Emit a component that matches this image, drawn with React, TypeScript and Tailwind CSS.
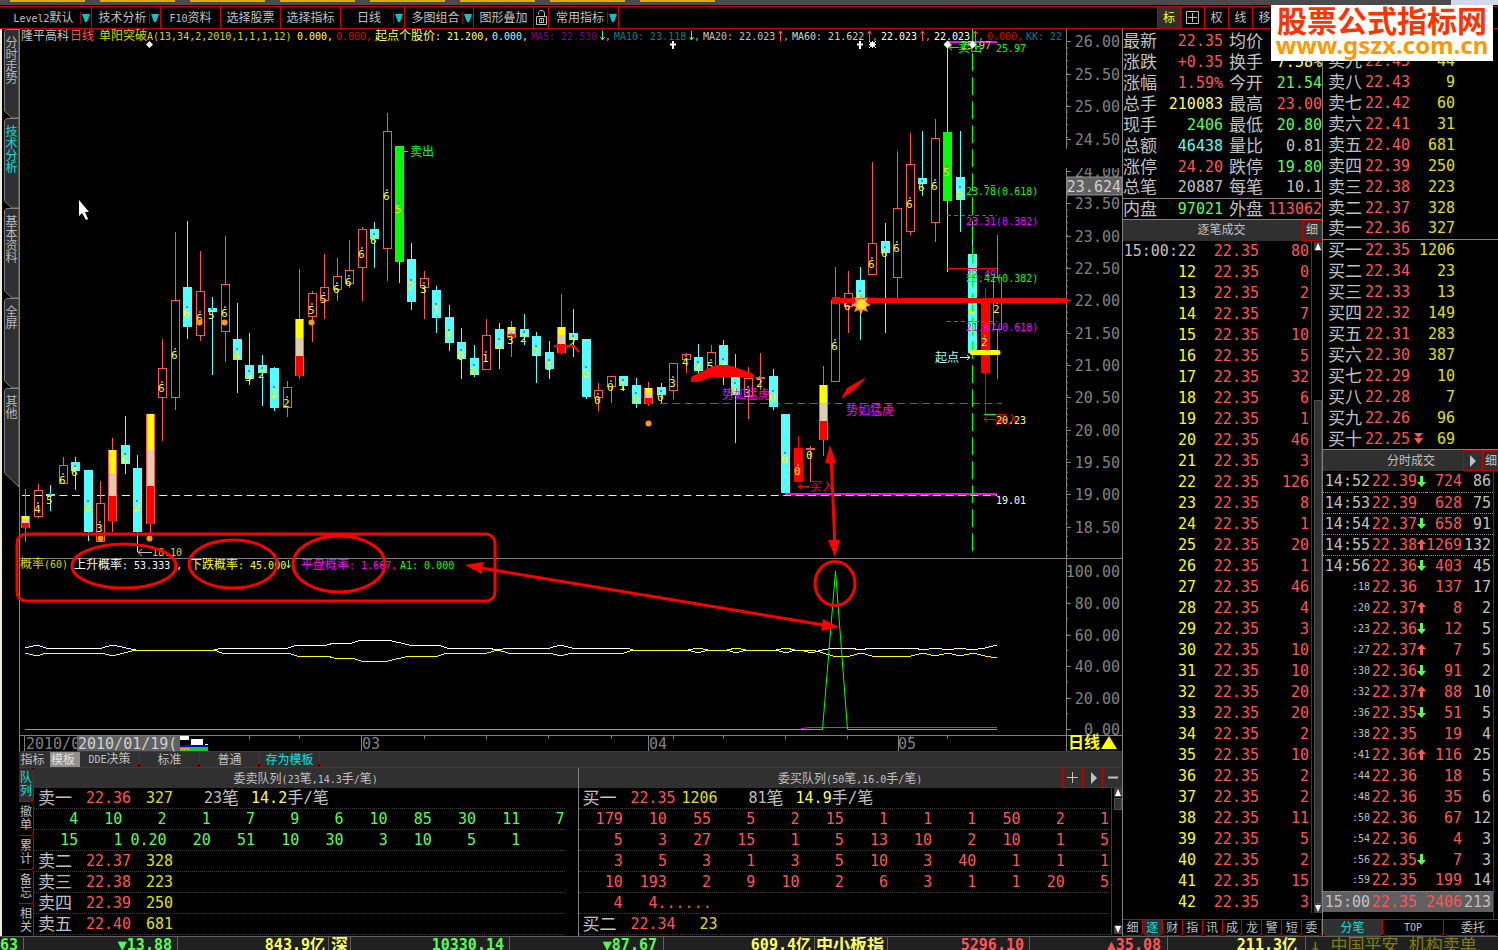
import React from 'react';

type Kind = 'hollow' | 'down' | 'tri' | 'sell' | 'solid';

interface Candle {
  high: number;
  top: number;
  bottom: number;
  low: number;
  kind: Kind;
  label?: string;
  labelY?: number;
  // boundaries of the yellow / tan / red segments
  split?: [number, number];
}

const c = (
  high: number,
  top: number,
  bottom: number,
  low: number,
  kind: Kind,
  label?: string,
  labelY?: number,
  split?: [number, number],
): Candle => ({ high, top, bottom, low, kind, label, labelY, split });

const CANDLES: Candle[] = [
  c(489, 516, 528, 542, 'tri', undefined, undefined, [519, 523]),
  c(484, 490, 517, 518, 'hollow', '4', 509),
  c(485, 494, 496, 511, 'down', '5', 500),
  c(457, 465, 484, 484, 'hollow', '6', 480),
  c(457, 462, 471, 490, 'down', '6', 472),
  c(470, 470, 532, 541, 'down', '3', 507),
  c(481, 503, 542, 542, 'hollow', '3', 528),
  c(438, 450, 521, 532, 'tri', undefined, undefined, [473, 496]),
  c(416, 445, 464, 474, 'down', '6', 460),
  c(455, 468, 532, 552, 'down', '2', 507),
  c(414, 414, 524, 535, 'tri', undefined, undefined, [450, 486]),
  c(339, 368, 398, 441, 'hollow', '6', 388),
  c(232, 300, 398, 410, 'hollow', '6', 355),
  c(221, 287, 327, 339, 'down', '6', 313),
  c(251, 291, 336, 341, 'hollow', '6', 318),
  c(297, 308, 312, 375, 'down', '5', 315),
  c(236, 284, 332, 362, 'hollow', '6', 313),
  c(303, 339, 360, 393, 'down', '4', 355),
  c(333, 365, 379, 385, 'down', '3', 377),
  c(355, 365, 373, 406, 'down', '2', 374),
  c(367, 368, 408, 411, 'down', '2', 393),
  c(381, 387, 408, 417, 'hollow', '2', 403),
  c(269, 319, 376, 379, 'tri', undefined, undefined, [338, 356]),
  c(291, 293, 317, 342, 'hollow', '5', 310),
  c(254, 287, 301, 319, 'hollow', '5', 299),
  c(258, 276, 290, 301, 'hollow', '6', 289),
  c(240, 270, 284, 288, 'hollow', '6', 282),
  c(227, 229, 268, 301, 'hollow', '6', 254),
  c(222, 229, 239, 268, 'down', '6', 240),
  c(113, 131, 249, 281, 'hollow', '6', 196),
  c(146, 146, 262, 283, 'sell', '5', 209),
  c(243, 259, 302, 310, 'down', '2', 286),
  c(271, 278, 288, 319, 'hollow', '3', 289),
  c(286, 290, 318, 333, 'down', '1', 310),
  c(305, 317, 343, 351, 'down', '1', 336),
  c(328, 342, 359, 379, 'down', '0', 356),
  c(345, 358, 375, 377, 'down', '0', 371),
  c(319, 335, 370, 370, 'hollow', '1', 358),
  c(323, 329, 349, 369, 'down', '2', 345),
  c(321, 327, 338, 357, 'tri', '3', 340, [330, 334]),
  c(314, 329, 337, 345, 'down', '2', 338),
  c(332, 336, 356, 383, 'down', '2', 352),
  c(341, 352, 369, 379, 'down', '1', 366),
  c(294, 327, 353, 354, 'tri', undefined, undefined, [335, 344]),
  c(309, 333, 340, 357, 'down', '2', 342),
  c(339, 339, 397, 399, 'down', '0', 373),
  c(383, 390, 398, 411, 'hollow', '0', 400),
  c(376, 376, 387, 403, 'hollow', '0', 387),
  c(376, 376, 386, 391, 'down', '1', 386),
  c(378, 385, 404, 408, 'down', '0', 399),
  c(382, 388, 404, 406, 'tri', undefined, undefined, [393, 398]),
  c(383, 387, 395, 403, 'down', '0', 397),
  c(363, 363, 391, 399, 'hollow', '3', 383),
  c(353, 354, 360, 373, 'hollow', '4', 362),
  c(344, 357, 371, 375, 'down', '4', 368),
  c(345, 352, 370, 370, 'hollow', '5', 366),
  c(340, 345, 366, 385, 'down', '3', 365),
  c(354, 377, 395, 443, 'down', '1', 389),
  c(367, 378, 397, 419, 'hollow', '3', 393),
  c(353, 377, 378, 390, 'hollow', '2', 383),
  c(369, 376, 407, 410, 'down', '0', 397),
  c(414, 414, 493, 494, 'down', '0', 459),
  c(436, 448, 482, 482, 'solid', '0', 471),
  c(446, 448, 449, 482, 'hollow', '0', 455),
  c(366, 385, 440, 456, 'tri', undefined, undefined, [403, 421]),
  c(267, 300, 382, 382, 'hollow', '6', 346),
  c(271, 293, 307, 333, 'hollow', '6', 306),
  c(267, 280, 300, 340, 'down', '6', 297),
  c(162, 243, 275, 275, 'hollow', '6', 264),
  c(223, 241, 253, 333, 'down', '6', 253),
  c(151, 208, 278, 298, 'hollow', '6', 248),
  c(133, 164, 232, 235, 'hollow', '6', 204),
  c(131, 178, 184, 196, 'down', '6', 187),
  c(119, 138, 223, 242, 'hollow', '6', 186),
  c(44, 132, 201, 272, 'sell', '5', 172),
  c(131, 177, 200, 232, 'down', '5', 193),
  c(239, 254, 353, 353, 'down', '2', 309),
  c(288, 302, 373, 414, 'solid', '2', 342),
  c(235, 277, 330, 379, 'hollow', '2', 309),
];

const STEP = 12.46;

const PRICE_TICKS: [string, number][] = [
  ['26.00', 41], ['25.50', 74], ['25.00', 106], ['24.50', 139], ['24.00', 171], ['23.50', 203],
  ['23.00', 236], ['22.50', 268], ['22.00', 300], ['21.50', 333], ['21.00', 365], ['20.50', 397],
  ['20.00', 430], ['19.50', 462], ['19.00', 494], ['18.50', 527],
];

const RATE_TICKS: [string, number][] = [
  ['100.00', 571], ['80.00', 603], ['60.00', 635], ['40.00', 666], ['20.00', 698], ['0.00', 729],
];

const QUOTES: [string, string, string, string, string, string][] = [
  ['最新', '22.35', 'text-[#ff5454]', '均价', '', 'text-[#ff5454]'],
  ['涨跌', '+0.35', 'text-[#ff5454]', '换手', '7.58%', 'text-[#ffff54]'],
  ['涨幅', '1.59%', 'text-[#ff5454]', '今开', '21.54', 'text-[#54ff54]'],
  ['总手', '210083', 'text-[#ffff54]', '最高', '23.00', 'text-[#ff5454]'],
  ['现手', '2406', 'text-[#54ff54]', '最低', '20.80', 'text-[#54ff54]'],
  ['总额', '46438', 'text-[#54ffff]', '量比', '0.81', 'text-[#c0c0c0]'],
  ['涨停', '24.20', 'text-[#ff5454]', '跌停', '19.80', 'text-[#54ff54]'],
  ['总笔', '20887', 'text-[#c0c0c0]', '每笔', '10.1', 'text-[#c0c0c0]'],
  ['内盘', '97021', 'text-[#54ff54]', '外盘', '113062', 'text-[#ff5454]'],
];

const TICK_VOLUMES = [
  80, 0, 2, 7, 10, 5, 32, 6, 1, 46, 3, 126, 8, 1, 20, 1, 46, 4, 3, 10, 10, 20, 20, 2, 10, 2, 2, 11, 5, 2, 15, 3,
];

const ASKS: [string, string, string][] = [
  ['卖九', '22.45', '44'], ['卖八', '22.43', '9'], ['卖七', '22.42', '60'],
  ['卖六', '22.41', '31'], ['卖五', '22.40', '681'], ['卖四', '22.39', '250'], ['卖三', '22.38', '223'],
  ['卖二', '22.37', '328'], ['卖一', '22.36', '327'],
];

const BIDS: [string, string, string][] = [
  ['买一', '22.35', '1206'], ['买二', '22.34', '23'], ['买三', '22.33', '13'], ['买四', '22.32', '149'],
  ['买五', '22.31', '283'], ['买六', '22.30', '387'], ['买七', '22.29', '10'], ['买八', '22.28', '7'],
  ['买九', '22.26', '96'], ['买十', '22.25', '69'],
];

const DEALS: [string, string, 'up' | 'down' | '', string, string][] = [
  ['14:52', '22.39', 'down', '724', '86'],
  ['14:53', '22.39', '', '628', '75'],
  ['14:54', '22.37', 'down', '658', '91'],
  ['14:55', '22.38', 'up', '1269', '132'],
  ['14:56', '22.36', 'down', '403', '45'],
  [':18', '22.36', '', '137', '17'],
  [':20', '22.37', 'up', '8', '2'],
  [':23', '22.36', 'down', '12', '5'],
  [':27', '22.37', 'up', '7', '5'],
  [':30', '22.36', 'down', '91', '2'],
  [':32', '22.37', 'up', '88', '10'],
  [':36', '22.35', 'down', '51', '5'],
  [':38', '22.35', '', '19', '4'],
  [':41', '22.36', 'up', '116', '25'],
  [':44', '22.36', '', '18', '5'],
  [':48', '22.36', '', '35', '6'],
  [':50', '22.36', '', '67', '12'],
  [':54', '22.36', '', '4', '3'],
  [':56', '22.35', 'down', '7', '3'],
  [':59', '22.35', '', '199', '14'],
  ['15:00', '22.35', '', '2406', '213'],
];

const runs = (text: string) => text.match(/[\x00-\x7f]+|[^\x00-\x7f]+/g) ?? [];
const isAscii = (text: string) => text.charCodeAt(0) < 128;

// Small label: latin runs are set narrower than the Chinese ones
const Small: React.FC<{ children: string }> = ({ children }) => (
  <span className="whitespace-pre text-[12px]">
    {runs(children).map((run, i) => (
      <span key={i} className={isAscii(run) ? 'text-[10px]' : 'text-[12px]'}>{run}</span>
    ))}
  </span>
);

const Label: React.FC<{ x: number; y: number; fill: string; children: string }> = ({ x, y, fill, children }) => (
  <text x={x} y={y} fill={fill} className="whitespace-pre">
    {runs(children).map((run, i) => (
      <tspan key={i} className={isAscii(run) ? 'text-[10px]' : 'text-[12px]'}>{run}</tspan>
    ))}
  </text>
);

const Caret = () => (
  <svg className="h-2 w-2" viewBox="0 0 8 8"><path d="M0 0h8L5 8H3z" fill="#00c8c8" /></svg>
);

const ToolItem: React.FC<{ width: string; caret?: boolean; children: React.ReactNode }> = ({ width, caret, children }) => (
  <button className={`flex h-full shrink-0 items-center border-r border-[#c80000] ${width}`}>
    <span className={`flex flex-1 justify-center ${caret ? 'pl-1' : ''}`}>{children}</span>
    {caret && (
      <span className="flex h-3 w-[11px] items-center justify-end border-l border-[#a00000] pr-px">
        <Caret />
      </span>
    )}
  </button>
);

const Toolbar = () => (
  <div className="flex h-[23px] items-center border-y border-[#c80000] pl-[3px]">
    <ToolItem width="w-[89px]" caret><Small>Level2默认</Small></ToolItem>
    <ToolItem width="w-[69px]" caret><Small>技术分析</Small></ToolItem>
    <ToolItem width="w-[60px]"><Small>F10资料</Small></ToolItem>
    <ToolItem width="w-[60px]"><Small>选择股票</Small></ToolItem>
    <ToolItem width="w-[60px]"><Small>选择指标</Small></ToolItem>
    <ToolItem width="w-[64px]" caret><Small>日线</Small></ToolItem>
    <ToolItem width="w-[69px]" caret><Small>多图组合</Small></ToolItem>
    <ToolItem width="w-[60px]"><Small>图形叠加</Small></ToolItem>
    <ToolItem width="w-[15px]">
      <svg className="h-[15px] w-[11px]" viewBox="0 0 11 15" fill="none" stroke="#c0c0c0" aria-label="lock">
        <path d="M2.500 4.500v-2l1.500-2h3l1.500 2v4M.5 6.500h10v8H.5zM3.500 8.500h4v4h-4zM5.500 9.500v2" />
      </svg>
    </ToolItem>
    <ToolItem width="w-[70px]" caret><Small>常用指标</Small></ToolItem>
    <div className="ml-auto flex h-full w-[341px]">
      <button className="w-6 border-x border-[#c80000] bg-[#303030] text-[12px] text-[#ffff00]">标</button>
      <button className="flex w-6 items-center justify-center border-r border-[#c80000]" aria-label="grid">
        <svg className="h-[13px] w-[13px]" viewBox="0 0 13 13" fill="none" stroke="#c0c0c0">
          <path d="M.5.5h12v12H.5zM6.500 2v9M2 6.500h9" />
        </svg>
      </button>
      {['权', '线', '移'].map((t) => (
        <button key={t} className="w-6 border-r border-[#c80000] text-[12px]">{t}</button>
      ))}
    </div>
  </div>
);

const sideTabs = [
  { text: '分时走势', h: 'h-[89px]', px: 89 },
  { text: '技术分析', h: 'h-[90px]', px: 90, active: true },
  { text: '基本资料', h: 'h-[90px]', px: 90 },
  { text: '全屏', h: 'h-[90px]', px: 90 },
  { text: '其他', h: 'h-[99px]', px: 99, last: true },
];

const SideTabs = () => (
  <nav className="w-[19px] shrink-0 border-l-2 border-[#f4ecd8] pl-[2px]">
    {sideTabs.map(({ text, h, px, active, last }) => (
      <button
        key={text}
        className={`relative block w-[15px] pt-2 text-left align-top text-[12px] leading-3 ${h} ${active ? 'text-[#00e0e0]' : 'text-[#b8b8b8]'}`}
      >
        <svg className="absolute inset-0 h-full w-full" viewBox={`0 0 15 ${px}`} preserveAspectRatio="none">
          <path
            d={last ? `M2.500 .5L.5 2.500V${px - 14}L15 ${px}V.5z` : `M2.500 .5L.5 2.500V${px - 7}L8 ${px}H15V.5z`}
            fill="#303030"
            stroke="#808080"
          />
        </svg>
        <span className="relative flex h-full flex-col items-center">
          {[...text].map((ch) => <span key={ch}>{ch}</span>)}
        </span>
      </button>
    ))}
  </nav>
);

const CandleShape: React.FC<{ candle: Candle; index: number }> = ({ candle, index }) => {
  const x = Math.round(25.2 + index * STEP);
  const { high, top, bottom, low, kind, label, labelY, split } = candle;
  const wick = kind === 'hollow' || kind === 'tri' ? '#ff5454' : kind === 'solid' ? '#ff0000' : '#54ffff';
  const fill = { hollow: 'none', down: '#54ffff', tri: '#ff0000', sell: '#00ff00', solid: '#ff0000' }[kind];
  return (
    <g>
      <path d={`M${x + 0.5} ${high}V${top}M${x + 0.5} ${bottom}V${low}`} stroke={wick} />
      {kind === 'hollow' ? (
        <rect x={x - 3.5} y={top + 0.5} width={8} height={Math.max(bottom - top - 1, 1)} fill="none" stroke={wick} />
      ) : (
        <rect x={x - 4} y={top} width={9} height={bottom - top} fill={fill} />
      )}
      {split && (
        <>
          <rect x={x - 4} y={top} width={9} height={bottom - top} fill="#ff5454" />
          <rect x={x - 3} y={top} width={7} height={split[0] - top} fill="#ffff00" />
          <rect x={x - 3} y={split[0]} width={7} height={split[1] - split[0]} fill="#deceae" />
          <rect x={x - 3} y={split[1]} width={7} height={bottom - split[1]} fill="#ff0000" />
        </>
      )}
      {label && labelY && (
        <>
          <rect x={x - 1} y={labelY - 7} width={2} height={2} fill="#808080" />
          <text x={x - 4} y={labelY + 4} fill="#ffff00" className="text-[11px]">{label}</text>
        </>
      )}
    </g>
  );
};

const Chart = () => (
  <svg
    className="relative z-10 block h-[722px] w-full overflow-visible"
    viewBox="19 29 1103 722"
    preserveAspectRatio="xMinYMin"
    role="img"
    aria-label="隆平高科日线"
  >
    {/* frame */}
    <path d="M19.500 29V751M19 558.500H1122M19 735.500H1122M1066.500 29V149M1066.500 168V751" stroke="#808080" fill="none" />
    <path d="M1067.500 41V149M1067.500 171V556" stroke="#808080" strokeDasharray="1 5.400" />
    <path d="M1067.500 571V734" stroke="#808080" strokeDasharray="1 14.800" />
    {PRICE_TICKS.map(([t, y]) => (
      <g key={t}>
        <path d={`M1067 ${y + 0.5}h4`} stroke="#808080" />
        <text x={1120} y={y + 6} fill="#808080" textAnchor="end" className="text-[15px]">{t}</text>
      </g>
    ))}
    {RATE_TICKS.map(([t, y]) => (
      <g key={t}>
        <path d={`M1067 ${y + 0.5}h4`} stroke="#808080" />
        <text x={1120} y={y + 6} fill="#808080" textAnchor="end" className="text-[15px]">{t}</text>
      </g>
    ))}
    <path d="M1060 150h62v18h-62z" fill="#000" />
    <rect x={1067} y={177} width={55} height={18} fill="#606060" stroke="#909090" />
    <text x={1121} y={192} fill="#d0d0d0" textAnchor="end" className="text-[15px]">23.624</text>

    {/* horizontal levels */}
    <path d="M22 495.500H997" stroke="#ffff54" strokeDasharray="8 4.480" />
    <path d="M660 403.500H1002" stroke="#ff2020" strokeDasharray="8 4.480" />

    {CANDLES.map((candle, i) => <CandleShape key={i} candle={candle} index={i} />)}

    {[[100, 538], [149, 538], [199, 322], [224, 322], [311, 322], [648, 423]].map(([x, y]) => (
      <circle key={`${x}-${y}`} cx={x + 0.5} cy={y + 0.5} r={3} fill="#ff9c00" />
    ))}

    <path d="M785 494H997" stroke="#ff00ff" strokeWidth={2} />
    <path d="M947 42H997" stroke="#ff00ff" strokeWidth={2} />
    <path d="M972.500 29V554" stroke="#00ff00" strokeDasharray="18 6" />
    <path d="M691 377L705 370 716 365 728 365 740 369 754 374V378L735 377 712 377 698 382H691z" fill="#ff0000" />
    <path d="M554 346h20l5 6" stroke="#ff0000" strokeWidth={2} fill="none" />
    <path d="M841 399L847 388 866 377 858 387 850 393z" fill="#ff0000" />
    <path d="M947 268.500H997" stroke="#ff0000" />
    <path d="M947 215.500H997M947 321.500H997" stroke="#ff00ff" strokeDasharray="4 3" />
    <path d="M984 185.500H997" stroke="#00ff00" strokeDasharray="4 3" />
    <path d="M984 414.500H997" stroke="#00ff00" />
    <path d="M972 352.500H998" stroke="#ffff00" strokeWidth={5} strokeLinecap="round" />
    <path d="M832 297h8v1h226l4 2.500-4 2.500H840v1h-8z" fill="#ff0000" />
    <path d="M861 294l2 5 5-2-2 5 5 3-5 2 2 5-5-2-2 5-2-5-5 2 2-5-5-2 5-3-2-5 5 2z" fill="#ff9050" />
    <circle cx={861.5} cy={304.5} r={5} fill="#ffe020" />

    <path d="M402 151.500h6" stroke="#00ff00" />
    <Label x={410} y={156} fill="#00ff00">卖出</Label>
    <Label x={961} y={49} fill="#d8d800">25.97</Label>
    <Label x={958} y={52} fill="#00ff00">卖出</Label>
    <path d="M949 47.500h10M952 45l-3 2.500 3 2.500" stroke="#00ff00" fill="none" />
    <Label x={996} y={52} fill="#00ff00">25.97</Label>
    <Label x={966} y={195} fill="#00ff00">23.78(0.618)</Label>
    <Label x={966} y={225} fill="#ff00ff">23.31(0.382)</Label>
    <Label x={966} y={278} fill="#ff00ff">22.49</Label>
    <Label x={966} y={282} fill="#00ff00">22.42(0.382)</Label>
    <Label x={966} y={331} fill="#ff00ff">21.67(0.618)</Label>
    <Label x={935} y={362} fill="#a8ffff">起点</Label>
    <path d="M960 357.500h10M967 355l3 2.500-3 2.500" stroke="#a8ffff" fill="none" />
    <Label x={722} y={399} fill="#ff00ff">势如猛虎</Label>
    <Label x={846} y={415} fill="#ff00ff">势如猛虎</Label>
    <path d="M984 419.500h12M987 417l-3 2.500 3 2.500M798 486.500h11M801 484l-3 2.500 3 2.500" stroke="#ff0000" fill="none" />
    <Label x={995} y={424} fill="#ff0000">买入</Label>
    <Label x={996} y={424} fill="#ffff54">20.23</Label>
    <Label x={810} y={491} fill="#ff0000">买入</Label>
    <Label x={996} y={504} fill="#ffffff">19.01</Label>
    <path d="M138 552.500h14M142 549l-4 3.500 4 3.500" stroke="#c0c0c0" fill="none" />
    <Label x={152} y={556} fill="#d8d800">18.10</Label>

    {/* markers at the top */}
    <path d="M149.500 41l3.500 3.500-3.500 3.500-3.500-3.500zM947.500 40.500l4 4-4 4-4-4zM972.500 40.500l4 4-4 4-4-4z" fill="#ffffff" />
    <path d="M670 44.500h6M673 41v8M857 44.500h6M860 41v8" stroke="#ffffff" strokeWidth={2} />
    <circle cx={872.5} cy={44.5} r={2.5} fill="#ffffff" />
    <path d="M869 41l7 7M876 41l-7 7M872.500 41v7M869 44.500h7" stroke="#ffffff" />

    {/* main indicator line */}
    <Label x={21} y={40} fill="#c0c0c0">隆平高科</Label>
    <Label x={70} y={40} fill="#ff5454">日线</Label>
    <Label x={99} y={40} fill="#d8d800">单阳突破A(13,34,2,2010,1,1,1,12)</Label>
    <Label x={297} y={40} fill="#ffff54">0.000,</Label>
    <Label x={336} y={40} fill="#e00000">0.000,</Label>
    <Label x={375} y={40} fill="#ffff54">起点个股价: 21.200,</Label>
    <Label x={492} y={40} fill="#a8ffff">0.000,</Label>
    <Label x={531} y={40} fill="#800080">MA5: 22.530</Label>
    <Label x={614} y={40} fill="#008080">MA10: 23.118</Label>
    <Label x={703} y={40} fill="#c0c0c0">MA20: 22.023</Label>
    <Label x={792} y={40} fill="#c0dcc0">MA60: 21.622</Label>
    <Label x={881} y={40} fill="#ffffff">22.023</Label>
    <Label x={934} y={40} fill="#ffffff">22.023</Label>
    <Label x={987} y={40} fill="#e00000">0.000,</Label>
    <Label x={1026} y={40} fill="#008080">KK: 22</Label>
    {[602, 691].map((x) => (
      <path key={x} d={`M${x + 0.5} 31v9m-2-3l2 3 2-3`} stroke="#54ff54" fill="none" />
    ))}
    {[780, 869, 922, 975].map((x) => (
      <path key={x} d={`M${x + 0.5} 41v-10m-2 3l2-3 2 3`} stroke="#ff5454" fill="none" />
    ))}
    {[605, 694, 783, 872, 925, 978].map((x) => (
      <Label key={x} x={x} y={40} fill="#a0a0a0">,</Label>
    ))}

    {/* sub chart */}
    <polyline
      points="25,648 37,645 46,648 102,648 112,645 136,650 214,650 222,648 288,648 297,645 327,645 334,643 352,643 361,640 388,640 409,645 438,645 447,648 487,648 498,650 508,648 550,648 560,645 572,648 627,648 633,650 688,650 698,653 708,650 727,650 736,653 746,650 776,650 786,653 795,650 801,650 811,653 822,650 835,648 850,648 861,650 870,648 913,648 924,650 935,648 948,650 960,648 972,650 985,648 997,645"
      fill="none" stroke="#ffffff" shapeRendering="crispEdges"
    />
    <polyline
      points="25,653 37,656 46,653 102,653 112,656 136,650 214,650 222,653 288,653 297,656 327,656 334,658 352,658 361,661 388,661 409,656 438,656 447,653 487,653 498,650 508,653 550,653 560,656 572,653 624,653 633,650 688,650 698,648 708,650 727,650 736,648 746,650 776,650 786,648 795,650 813,650 833,656 850,656 861,653 872,656 911,656 923,653 935,656 948,653 960,656 973,653 985,656 997,658"
      fill="none" stroke="#ffff00" shapeRendering="crispEdges"
    />
    <path d="M801 728.500L810 727.500H997" stroke="#ff00ff" fill="none" />
    <path d="M25 729.500H822.500L835.500 571 847.500 729.500H997" stroke="#00ff00" fill="none" />
    <Label x={20} y={568} fill="#d8d800">概率(60)</Label>
    <Label x={74} y={569} fill="#ffffff">上升概率: 53.333 ,</Label>
    <Label x={190} y={569} fill="#ffff00">下跌概率: 45.000</Label>
    <path d="M288.500 560v8m-2-3l2 3 2-3" stroke="#54ff54" fill="none" />
    <Label x={301} y={569} fill="#ff00ff">平盘概率: 1.667,</Label>
    <Label x={400} y={569} fill="#00ff00">A1: 0.000</Label>

    {/* time axis */}
    <path
      d="M24.500 736v15M361.500 736v15M648.500 736v15M898.500 736v15M249.500 736v3M299.500 736v3M424.500 736v3M486.500 736v3M548.500 736v3M611.500 736v3M673.500 736v3M723.500 736v3M785.500 736v3M847.500 736v3M910.500 736v3M947.500 736v3"
      stroke="#808080"
    />
    <g className="text-[15px]">
      <text x={26} y={749} fill="#808080">2010/0</text>
      <text x={362} y={749} fill="#808080">03</text>
      <text x={649} y={749} fill="#808080">04</text>
      <text x={898} y={749} fill="#808080">05</text>
      <rect x={77} y={736} width={103} height={15} fill="#606060" />
      <text x={78} y={749} fill="#d0d0d0">2010/01/19(</text>
      <text x={1068} y={748} fill="#ffff00" className="text-[16px] font-bold">日线</text>
    </g>
    <path d="M1109 736l8 13h-16z" fill="#ffff00" />
    <path d="M180 736h9v4h-9zM191 739h12v6h-12zM205 744h3v2h-3z" fill="#ffffff" />
    <path d="M180 745h28v2h-28z" fill="#0000ff" />
    <path d="M180 747h28v4h-28z" fill="#20c820" />
    <path d="M180 748h10v2h-10z" fill="#ff9000" />

    {/* hand-drawn notes */}
    <g fill="none" stroke="#ff0000" strokeWidth={3}>
      <rect x={17} y={534} width={478} height={67} rx={9} />
      <ellipse cx={124} cy={566} rx={52} ry={22} />
      <ellipse cx={233} cy={564} rx={44} ry={24} />
      <ellipse cx={339} cy={564} rx={46} ry={28} />
      <ellipse cx={835} cy={583.5} rx={20} ry={22} />
      <path d="M475 567L830 626M831 455L835 548" />
    </g>
    <path d="M465 565l18-3-1 12zM839 627l-16-8-2 12zM830 445l-5 18h11zM835 557l-7-17h12z" fill="#ff0000" />
    <path d="M79 200v16l3-3 4 7 2-1-3-7h4z" fill="#ffffff" />
  </svg>
);

const TemplateTabs = () => (
  <div className="flex h-[17px] items-center border-y border-[#c80000] bg-[#303030] text-[12px] leading-3">
    <button className="w-[31px] pr-1 whitespace-nowrap">指标</button>
    <button className="h-full w-[30px] bg-[#909090] pr-1 whitespace-nowrap text-[#e0e0e0]">模板</button>
    {['DDE决策', '标准', '普通', '存为模板'].map((t) => (
      <button
        key={t}
        className={`relative h-full w-[60px] border-r border-[#c80000] ${t === '存为模板' ? 'text-[#00e0e0]' : ''}`}
      >
        <Small>{t}</Small>
        <svg className="absolute -right-1 bottom-0 h-1 w-2" viewBox="0 0 8 4"><path d="M1 4l3-4 3 4z" fill="#000" stroke="#c80000" /></svg>
      </button>
    ))}
  </div>
);

const queueTabs = ['队列', '撤单', '累计', '备忘', '相关'];

interface QueueHeadProps {
  name: string;
  price: string;
  count: string;
  orders?: string;
  avg?: string;
}

const rowLine = 'h-[21px] border-b border-dotted border-[#404040] leading-5';

const QueueHead: React.FC<QueueHeadProps> = ({ name, price, count, orders, avg }) => (
  <div className={`flex pl-1 ${rowLine}`}>
    <span className="w-12 text-[17px]">{name}</span>
    <span className="w-[45px] text-[#ff5454]">{price}</span>
    <span className="w-[42px] text-right text-[#e0e000]">{count}</span>
    {orders && (
      <span className="ml-[31px] flex">
        {orders}<span className="text-[17px]">笔</span>
        <span className="ml-3 text-[#ffff54]">{avg}</span>
        <span className="text-[16px]">手/笔</span>
      </span>
    )}
  </div>
);

const QueueRow: React.FC<{ values: string[]; color: string }> = ({ values, color }) => (
  <div className={`grid grid-cols-12 text-right ${rowLine} ${color}`}>
    {values.map((v, i) => <span key={i} className="flex justify-end">{v}</span>)}
  </div>
);

const ScrollMark: React.FC<{ dir: 'up' | 'down'; thumb?: string }> = ({ dir, thumb }) => (
  <div className="flex flex-col items-end gap-px">
    <svg className="h-[9px] w-2" viewBox="0 0 8 9">
      <rect width={8} height={9} fill="#404040" />
      <path d={dir === 'up' ? 'M4 1l3 7H1z' : 'M4 8L1 1h6z'} fill="#ffffff" />
    </svg>
    {thumb && <div className={`w-2 border border-[#505050] bg-[#303030] ${thumb}`} />}
  </div>
);

const Queues = () => (
  <div className="flex h-[168px] overflow-hidden">
    <nav className="w-[15px] shrink-0">
      {queueTabs.map((t, i) => (
        <button
          key={t}
          className={`flex h-[34px] w-[15px] flex-col items-center justify-center rounded-r border-r border-b border-[#c80000] text-[12px] leading-[13px] ${i === 0 ? 'bg-[#303030] text-[#00e0e0]' : ''}`}
        >
          <span>{t[0]}</span>
          <span>{t[1]}</span>
        </button>
      ))}
    </nav>
    <section className="flex-1 border-r border-[#808080]">
      <h2 className="h-5 bg-[#303030] text-center leading-5"><Small>委卖队列(23笔,14.3手/笔)</Small></h2>
      <div className="pr-[13px] text-[15px]">
        <QueueHead name="卖一" price="22.36" count="327" orders="23" avg="14.2" />
        <QueueRow color="text-[#54ff54]" values={['4', '10', '2', '1', '7', '9', '6', '10', '85', '30', '11', '7']} />
        <QueueRow color="text-[#54ff54]" values={['15', '1', '0.20', '20', '51', '10', '30', '3', '10', '5', '1']} />
        <QueueHead name="卖二" price="22.37" count="328" />
        <QueueHead name="卖三" price="22.38" count="223" />
        <QueueHead name="卖四" price="22.39" count="250" />
        <QueueHead name="卖五" price="22.40" count="681" />
      </div>
    </section>
    <section className="flex-1">
      <header className="flex h-5 bg-[#303030]">
        <h2 className="flex-1 pl-[60px] text-center leading-5"><Small>委买队列(50笔,16.0手/笔)</Small></h2>
        {['M3 8.500h11M8.500 3v11', 'M7 3l6 6-6 6z', 'M4 8.500h10'].map((d, i) => (
          <button key={d} className="flex w-5 items-center justify-center border-l border-b border-[#c80000]" aria-label={['加', '下一页', '减'][i]}>
            <svg className="h-[17px] w-[17px]" viewBox="0 0 17 17">
              <path d={d} stroke={i === 1 ? 'none' : '#c0c0c0'} strokeWidth={i === 2 ? 2 : 1} fill={i === 1 ? '#c0c0c0' : 'none'} />
            </svg>
          </button>
        ))}
      </header>
      <div className="flex">
        <div className="flex-1 pr-[2px] text-[15px]">
          <QueueHead name="买一" price="22.35" count="1206" orders="81" avg="14.9" />
          <QueueRow color="text-[#ff5454]" values={['179', '10', '55', '5', '2', '15', '1', '1', '1', '50', '2', '1']} />
          <QueueRow color="text-[#ff5454]" values={['5', '3', '27', '15', '1', '5', '13', '10', '2', '10', '1', '5']} />
          <QueueRow color="text-[#ff5454]" values={['3', '5', '3', '1', '3', '5', '10', '3', '40', '1', '1', '1']} />
          <QueueRow color="text-[#ff5454]" values={['10', '193', '2', '9', '10', '2', '6', '3', '1', '1', '20', '5']} />
          <div className={`flex text-[#ff5454] ${rowLine}`}>
            <span className="w-11 text-right">4</span>
            <span className="pl-[26px]">4......</span>
          </div>
          <QueueHead name="买二" price="22.34" count="23" />
        </div>
        <div className="flex w-[11px] flex-col justify-between border-l border-[#c80000] pb-px">
          <ScrollMark dir="up" thumb="h-3" />
          <ScrollMark dir="down" />
        </div>
      </div>
    </section>
  </div>
);

const Arrow: React.FC<{ dir: string }> = ({ dir }) => (
  <svg className="h-[11px] w-[9px]" viewBox="0 0 9 11">
    <path
      d={dir === 'up' ? 'M4.500 0L9 5H6v6H3V5H0z' : 'M4.500 11L0 6h3V0h3v6h3z'}
      fill={dir === 'up' ? '#ff5454' : '#54ff54'}
    />
  </svg>
);

const QuotePanel = () => (
  <aside className="flex w-[200px] shrink-0 flex-col border-l border-[#808080]">
    <table className="mt-px w-full table-fixed text-[15px]">
      <colgroup>
        <col className="w-[33px]" /><col className="w-[67px]" /><col className="w-[39px]" /><col />
      </colgroup>
      <tbody>
        {QUOTES.map(([l1, v1, c1, l2, v2, c2], i) => (
          <tr key={l1} className={`h-[21px] leading-5 ${i === 8 ? 'border-y border-[#808080]' : ''}`}>
            <th className="p-0 text-left text-[17px] font-normal whitespace-nowrap">{l1}</th>
            <td className={`p-0 text-right ${c1}`}>{v1}</td>
            <th className="p-0 pl-[6px] text-left text-[17px] font-normal whitespace-nowrap">{l2}</th>
            <td className={`p-0 text-right ${c2}`}>{v2}</td>
          </tr>
        ))}
      </tbody>
    </table>
    <header className="flex h-[21px] items-center bg-[#303030]">
      <h2 className="flex-1 pl-[18px] text-center text-[12px]">逐笔成交</h2>
      <button className="h-full w-5 border border-[#c80000] text-[12px]">细</button>
    </header>
    <div className="flex">
      <table className="flex-1 table-fixed text-[15px]">
        <tbody>
          {TICK_VOLUMES.map((v, i) => (
            <tr key={i} className="h-[21px] leading-5">
              <td className={`w-[73px] p-0 text-right ${i ? 'text-[#ffff00]' : ''}`}>{i ? 11 + i : '15:00:22'}</td>
              <td className="w-[63px] p-0 text-right text-[#ff5454]">22.35</td>
              <td className="p-0 pr-[2px] text-right text-[#ff5454]">{v}</td>
            </tr>
          ))}
        </tbody>
      </table>
      <div className="flex w-[11px] flex-col justify-between border-l border-[#c80000] pt-px">
        <ScrollMark dir="up" />
        <div className="flex flex-col items-end">
          <div className="h-[504px] w-2 border border-[#505050] bg-[#303030]" />
          <ScrollMark dir="down" />
        </div>
      </div>
    </div>
    <nav className="mt-auto flex h-[17px] border-t border-[#c80000]">
      {[...'细逐财指讯成龙警短委'].map((t) => (
        <button
          key={t}
          className={`flex-1 rounded-b border-r border-b border-[#c80000] text-[12px] leading-[14px] ${t === '逐' ? 'bg-[#303030] text-[#00e0e0]' : ''}`}
        >
          {t}
        </button>
      ))}
    </nav>
  </aside>
);

const BookRows: React.FC<{ rows: [string, string, string][] }> = ({ rows }) => (
  <>
    {rows.map(([name, price, count]) => (
      <tr key={name} className="h-[21px] leading-5">
        <th className="p-0 pl-[5px] text-left text-[17px] font-normal whitespace-nowrap">{name}</th>
        <td className="p-0 text-right text-[#ff5454]">{price}</td>
        <td className="p-0 pl-1">
          {name === '买十' && (
            <svg className="h-[11px] w-[9px]" viewBox="0 0 9 11">
              <path d="M0 0h9L4.500 5zM0 5h9l-4.500 6z" fill="#ff5454" />
            </svg>
          )}
        </td>
        <td className="p-0 text-[#e0e000]"><span className="flex justify-end">{count}</span></td>
        <td className="p-0" />
      </tr>
    ))}
  </>
);

const BookPanel = () => (
  <aside className="flex w-[176px] shrink-0 flex-col border-l border-[#808080]">
    <table className="w-full table-fixed text-[15px]">
      <colgroup>
        <col className="w-[42px]" /><col className="w-[45px]" /><col className="w-[15px]" />
        <col className="w-[30px]" /><col />
      </colgroup>
      <tbody className="border-b border-[#808080]">
        <tr className="h-[21px]"><td colSpan={5} className="p-0" /></tr>
        <BookRows rows={ASKS} />
      </tbody>
      <tbody>
        <BookRows rows={BIDS} />
      </tbody>
    </table>
    <header className="flex h-[22px] items-center border-t border-[#808080] bg-[#303030]">
      <h2 className="flex-1 pl-9 text-center text-[12px]">分时成交</h2>
      <button className="flex h-full w-5 items-center justify-center border border-[#c80000]" aria-label="展开">
        <svg className="h-3 w-[6px]" viewBox="0 0 6 12"><path d="M0 0l6 6-6 6z" fill="#c0c0c0" /></svg>
      </button>
      <button className="h-full w-[15px] overflow-hidden border-y border-[#c80000] pl-[2px] text-left text-[12px] whitespace-nowrap">细</button>
    </header>
    <div className="flex flex-1">
      <table className="h-[441px] flex-1 table-fixed text-[15px]">
        <tbody>
          {DEALS.map(([time, price, dir, vol, count], i) => (
            <tr
              key={time}
              className={`h-[21px] leading-5 ${i < 4 || i === 19 ? 'border-b border-dotted border-[#909090]' : ''} ${i === 20 ? 'bg-[#606060]' : ''}`}
            >
              <td className={`w-[47px] p-0 text-right ${time.length < 4 ? 'text-[10px]' : ''}`}>{time}</td>
              <td className="w-[47px] p-0 text-right text-[#ff5454]">{price}</td>
              <td className="w-[9px] p-0">{dir && <Arrow dir={dir} />}</td>
              <td className="w-[36px] p-0 text-right text-[#ff5454]">{vol}</td>
              <td className="p-0 pr-[2px] text-right">{count}</td>
            </tr>
          ))}
        </tbody>
      </table>
      <div className="w-[5px] border-l border-[#c80000]" />
    </div>
    <nav className="flex h-[17px] border-t border-[#c80000] text-[12px] leading-[14px]">
      <button className="w-[60px] rounded-b border-r border-b border-[#c80000] bg-[#303030] text-[#00e0e0]">分笔</button>
      <button className="w-[61px] rounded-b border-r border-b border-[#c80000]"><Small>TOP</Small></button>
      <button className="flex-1 rounded-b border-b border-[#c80000] pl-1">委托</button>
    </nav>
  </aside>
);

const Cell: React.FC<{ width: string; color: string; children: string }> = ({ width, color, children }) => (
  <span className={`shrink-0 border-r border-[#606060] whitespace-nowrap ${width} ${color}`}>{children}</span>
);

const StatusBar = () => (
  <footer className="flex h-[14px] overflow-hidden border-t border-[#606060] bg-[#202020] text-right text-[15px] leading-[17px] font-bold">
    <Cell width="w-6 pr-[5px]" color="text-[#54ff54]">63</Cell>
    <Cell width="w-[154px] pr-[5px]" color="text-[#54ff54]">▼13.88</Cell>
    <Cell width="w-[151px] pr-[3px]" color="text-[#ffff54]">843.9亿</Cell>
    <Cell width="w-[22px] pr-[2px] text-[17px]" color="text-[#ffff54]">深</Cell>
    <Cell width="w-[159px] pr-[5px]" color="text-[#54ff54]">10330.14</Cell>
    <Cell width="w-[154px] pr-[6px]" color="text-[#54ff54]">▼87.67</Cell>
    <Cell width="w-[151px] pr-[3px]" color="text-[#ffff54]">609.4亿</Cell>
    <Cell width="w-[73px] pr-[3px] text-[17px]" color="text-[#ffff54]">中小板指</Cell>
    <Cell width="w-[142px] pr-[5px]" color="text-[#ff5454]">5296.10</Cell>
    <Cell width="w-[138px] pr-[6px]" color="text-[#ff5454]">▲35.08</Cell>
    <Cell width="w-[138px] pr-[8px]" color="text-[#ffff54]">211.3亿</Cell>
    <span className="flex-1 pl-1 text-left text-[17px] font-normal whitespace-nowrap text-[#808000]">↓ 中国平安 机构卖单</span>
  </footer>
);

const App: React.FC = () => {
  return (
    <div className="relative flex min-h-screen w-full flex-col overflow-hidden bg-black font-['DejaVu_Sans_Mono','Noto_Sans_CJK_SC',monospace] text-[#c0c0c0]">
      <div className="flex h-[6px] border-b border-black bg-[#4b4b4d] pl-[10px]">
        {[...Array(8)].map((_, i) => (
          <div key={i} className="mr-[15px] h-[2px] w-[75px] bg-[#e0a818]" />
        ))}
        <div className="ml-auto h-[5px] w-[47px] bg-[#d0d8ec]" />
      </div>
      <Toolbar />
      <main className="flex flex-1">
        <SideTabs />
        <div className="flex min-w-0 flex-1 flex-col">
          <Chart />
          <TemplateTabs />
          <Queues />
        </div>
        <QuotePanel />
        <BookPanel />
      </main>
      <StatusBar />
      <div className="absolute top-[5px] right-[5px] z-20 h-14 w-[222px] bg-white text-center font-['Noto_Sans','Noto_Sans_CJK_SC',sans-serif] font-bold whitespace-nowrap">
        <div className="text-[30px] leading-8 text-[#ff3300]">股票公式指标网</div>
        <a href="#" className="block text-[24px] leading-4 text-[#ff9900]">www.gszx.com.cn</a>
      </div>
    </div>
  );
};

export default App;
